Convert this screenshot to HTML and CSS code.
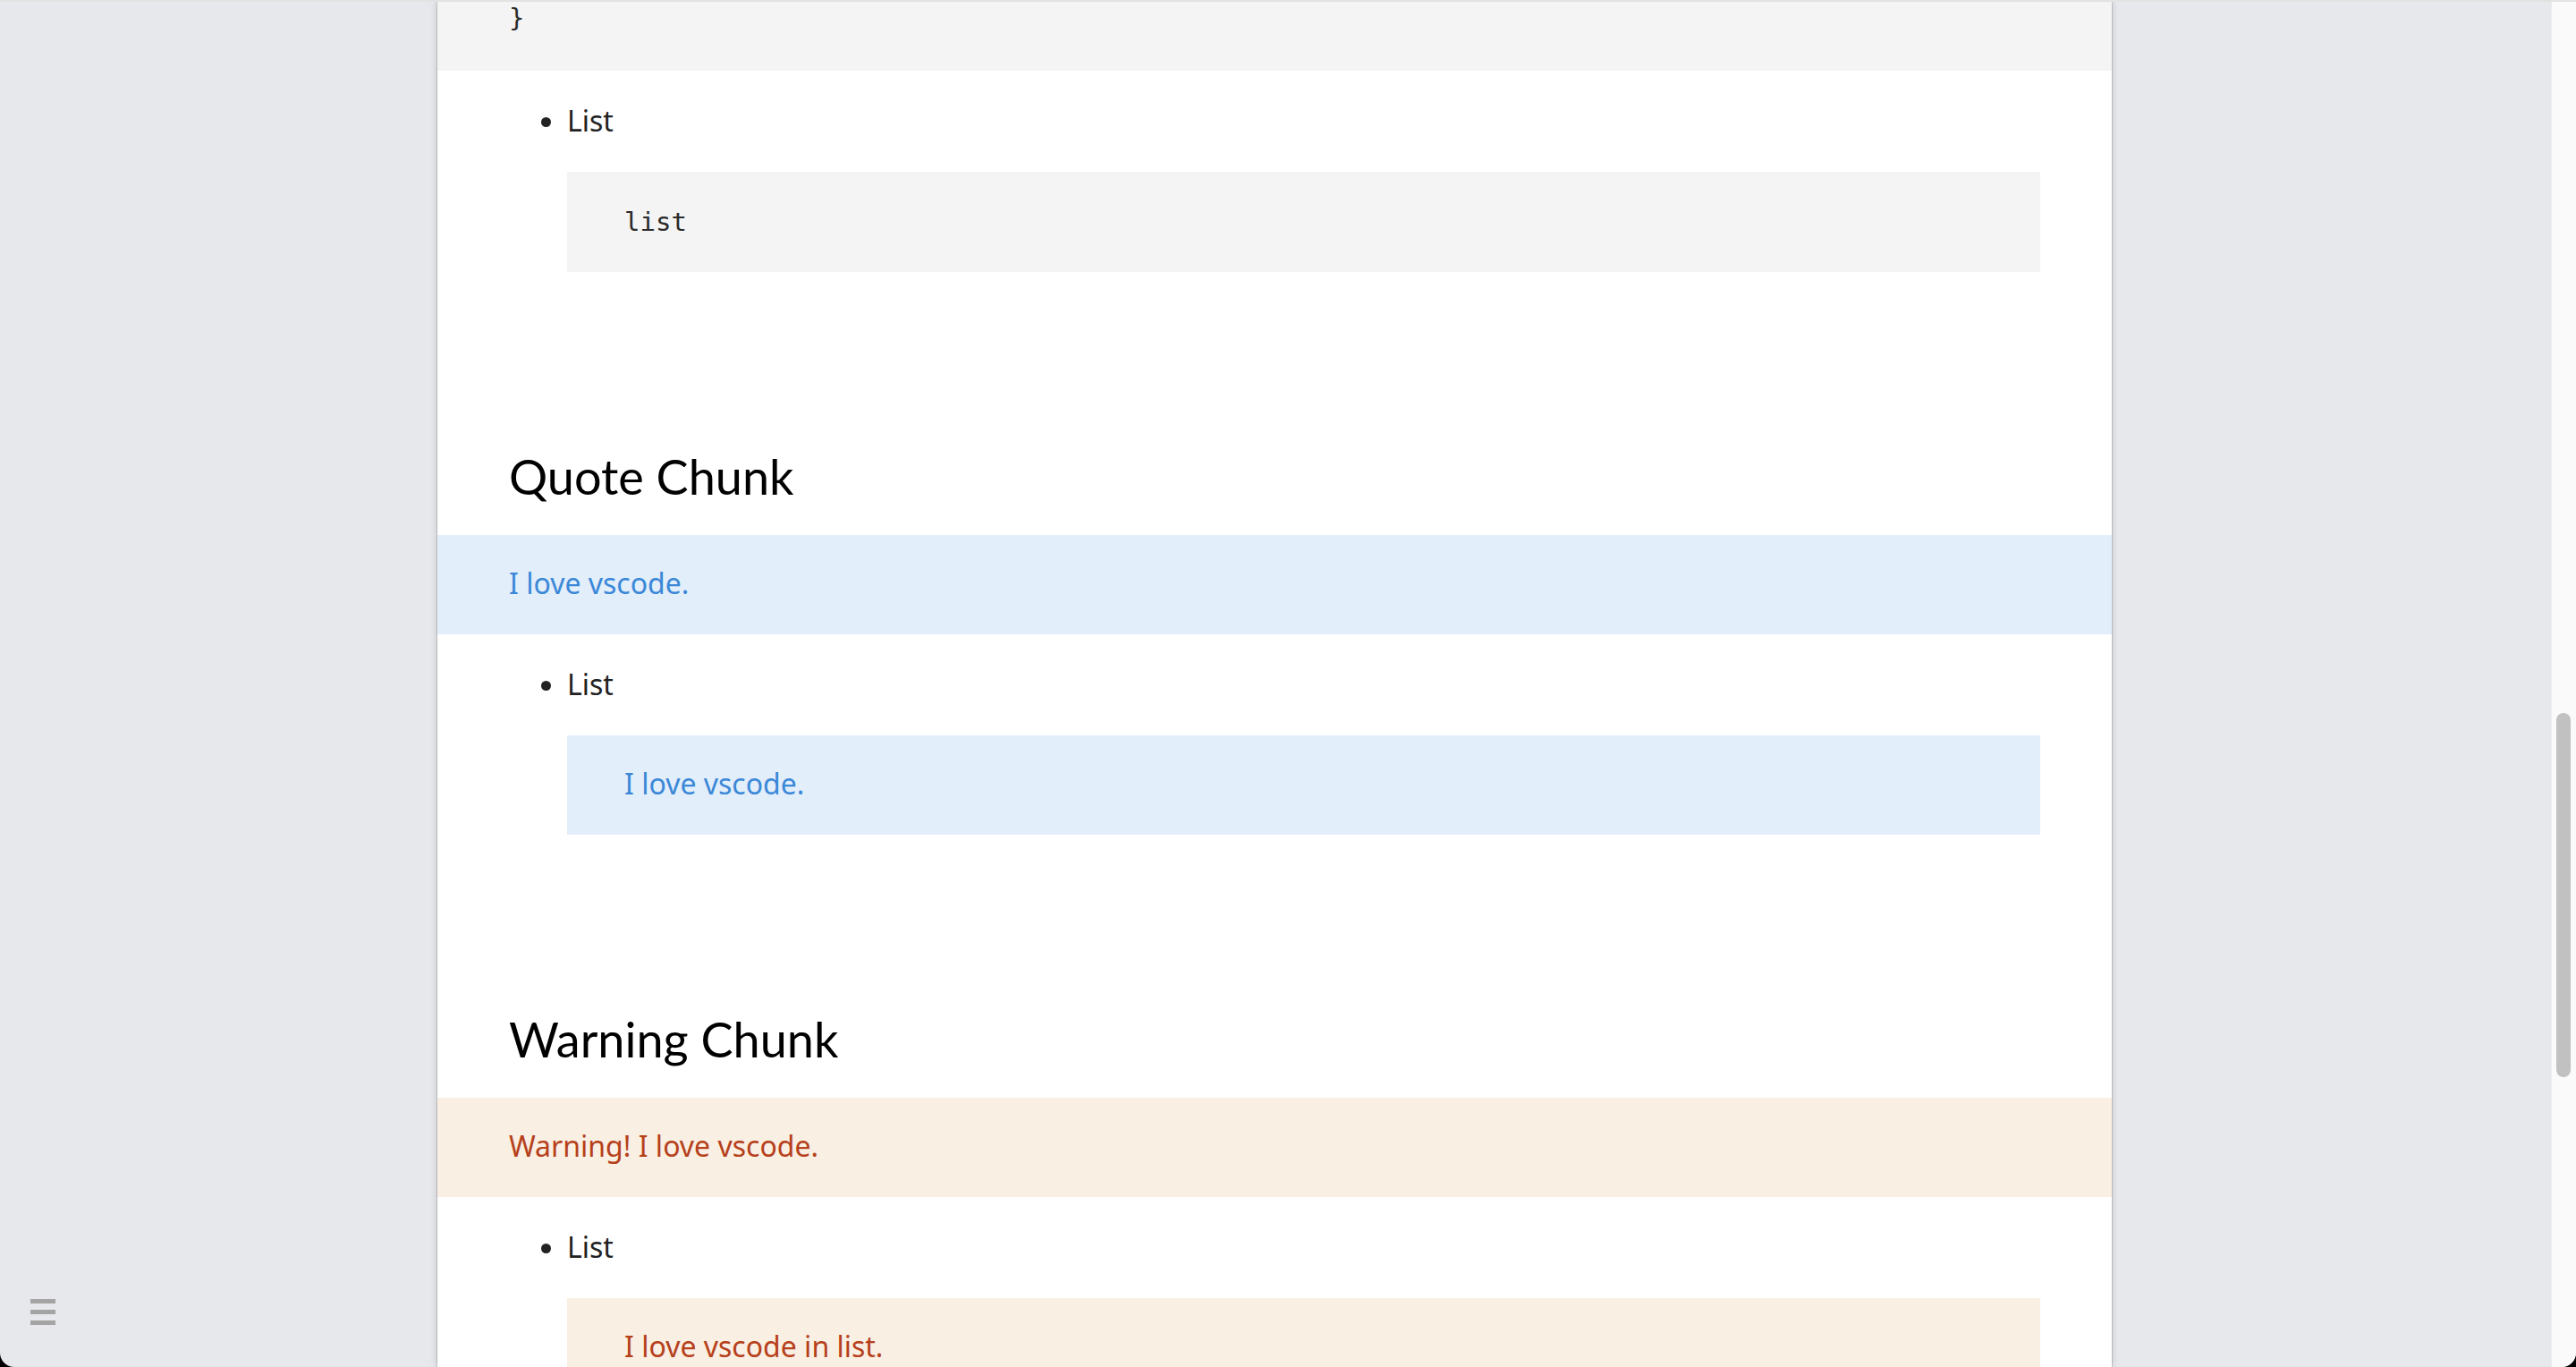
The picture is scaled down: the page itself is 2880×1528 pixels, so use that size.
FILE: index.html
```html
<!DOCTYPE html>
<html lang="en">
<head>
<meta charset="utf-8">
<title>Markdown Preview</title>
<link rel="stylesheet" href="styles.css">
</head>
<body>
<div class="window">
  <div class="viewport">
    <div class="page">
      <pre class="code code-full">}</pre>
      <ul class="list">
        <li>List<pre class="code code-inner">list</pre></li>
      </ul>
      <h2 class="heading">Quote Chunk</h2>
      <div class="chunk chunk-quote chunk-full">I love vscode.</div>
      <ul class="list">
        <li>List<div class="chunk chunk-quote chunk-inner">I love vscode.</div></li>
      </ul>
      <h2 class="heading">Warning Chunk</h2>
      <div class="chunk chunk-warning chunk-full">Warning! I love vscode.</div>
      <ul class="list">
        <li>List<div class="chunk chunk-warning chunk-inner">I love vscode in list.</div></li>
      </ul>
    </div>
  </div>
  <div class="scrollbar"><div class="thumb"></div></div>
</div>
<div class="menu-toggle"><span></span><span></span><span></span></div>
</body>
</html>
```

FILE: styles.css
```css
html {
  background: #000;
}

body {
  margin: 0;
  height: 1528px;
  overflow: hidden;
  background: #e7e8ec;
  border-radius: 0 0 16px 16px;
  font-family: "Noto Sans", "Open Sans", sans-serif;
  color: #222;
}

.window {
  display: flex;
  height: 100%;
  box-sizing: border-box;
  border-top: 2px solid #e2e2e2;
}

.viewport {
  flex: 1;
  display: flex;
  justify-content: center;
  overflow: hidden;
  padding-right: 2px;
}

.page {
  width: 1872px;
  box-sizing: border-box;
  padding: 0 80px;
  background: #fff;
  overflow: hidden;
  box-shadow: 0 0 0 1px rgba(0, 0, 0, 0.12), 0 0 8px rgba(0, 0, 0, 0.18);
}

.code {
  margin: 0;
  font-family: "DejaVu Sans Mono", "Liberation Mono", monospace;
  font-size: 29px;
  line-height: 52px;
  color: #2b2b2b;
  background: #f4f4f4;
}

.code-full {
  margin: -8px -80px 0;
  padding: 0 80px 33px;
}

.code-inner {
  margin-top: 32px;
  padding: 30px 64px;
}

.list {
  margin: 30px 0 0;
  padding-left: 65px;
  list-style: disc;
}

.list li {
  font-size: 32px;
  line-height: 51px;
}

.heading {
  margin: 198px 0 0;
  font-family: "Lato", "Open Sans", sans-serif;
  font-weight: 400;
  font-size: 54px;
  line-height: 62px;
  color: #000;
}

.chunk {
  font-size: 32px;
  line-height: 51px;
}

.chunk-full {
  margin: 34px -80px 0;
  padding: 28px 80px 32px;
}

.chunk-inner {
  margin-top: 32px;
  padding: 28px 64px 32px;
}

.chunk-quote {
  background: #e2eefa;
  color: #3b88d8;
}

.chunk-warning {
  background: #f9efe3;
  color: #b6401a;
}

.scrollbar {
  width: 28px;
  box-sizing: border-box;
  background: #fafafa;
  border-left: 1px solid #ececec;
}

.thumb {
  margin: 795px 0 0 5px;
  width: 16px;
  height: 407px;
  border-radius: 8px;
  background: #c1c1c1;
}

.menu-toggle {
  position: fixed;
  left: 34px;
  top: 1452px;
  display: flex;
  flex-direction: column;
  gap: 7px;
}

.menu-toggle span {
  display: block;
  width: 28px;
  height: 5px;
  background: #a4a4a4;
}
```
